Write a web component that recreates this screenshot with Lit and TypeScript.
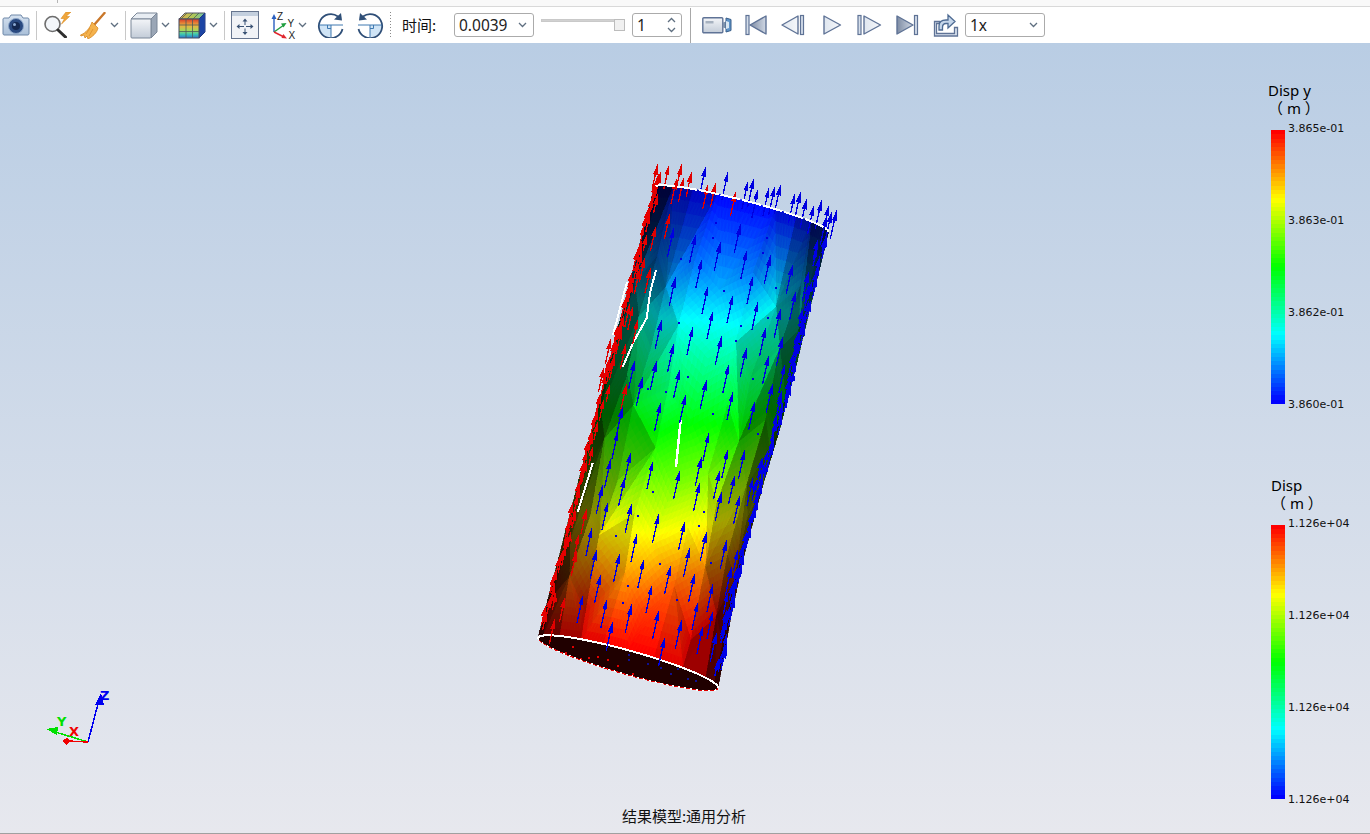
import { LitElement, css, html, svg } from "lit";
import { customElement, property } from "lit/decorators.js";

type Pt = [number, number];

function jet(c: number): string {
  const t = Math.max(0, Math.min(1, c));
  const ch = (x: number) => Math.round(255 * Math.max(0, Math.min(1, x)));
  const r = ch(t < 0.5 ? 0 : t < 0.75 ? (t - 0.5) * 4 : 1);
  const g = ch(t < 0.25 ? t * 4 : t < 0.75 ? 1 : (1 - t) * 4);
  const b = ch(t < 0.25 ? 1 : t < 0.5 ? (0.5 - t) * 4 : 0);
  return `${r},${g},${b}`;
}

function rng(seed: number) {
  let a = seed;
  return () => {
    a = (a + 0x6d2b79f5) | 0;
    let t = Math.imul(a ^ (a >>> 15), 1 | a);
    t = (t + Math.imul(t ^ (t >>> 7), 61 | t)) ^ t;
    return ((t ^ (t >>> 14)) >>> 0) / 4294967296;
  };
}

// cylinder surface, s = sin(angle) across, v along the axis
function surf(th: number, v: number): Pt {
  const s = Math.sin(th);
  const c = Math.cos(th);
  const cx = 741.5 + (628 - 741.5) * v;
  const cy = 209.5 + (663 - 209.5) * v;
  const ax = 87 + 3 * v;
  const ay = 22.5 + 2.5 * v;
  const waist = s > 0 && v > 0.4 && v < 1 ? 6 * Math.sin((Math.PI * (v - 0.4)) / 0.6) * s * s : 0;
  return [cx + ax * s + 3 * c - waist, cy + ay * s - (9 + 3 * v) * c];
}

// screen y to colour map position
function scalar(y: number): number {
  const stops: Pt[] = [[190, 0], [240, 0.02], [320, 0.25], [430, 0.5], [535, 0.75], [628, 1], [720, 1]];
  for (let i = 1; i < stops.length; i++) {
    if (y <= stops[i][0]) {
      const [y0, c0] = stops[i - 1];
      const [y1, c1] = stops[i];
      return c0 + ((c1 - c0) * Math.max(0, y - y0)) / (y1 - y0);
    }
  }
  return 1;
}

const DIR: Pt = [0.215, -0.976];

const z4 = (l: number[]): Pt[] => {
  const out: Pt[] = [];
  for (let i = 0; i < l.length; i += 2) out.push([530 + l[i] / 3, 150 + l[i + 1] / 3]);
  return out;
};
const z5 = (l: number[]): Pt[] => {
  const out: Pt[] = [];
  for (let i = 0; i < l.length; i += 2) out.push([530 + l[i] / 3, 420 + l[i + 1] / 3]);
  return out;
};

const BLUE_TIPS: Pt[] = [
  ...z4([528, 47, 595, 62, 672, 83, 655, 90, 685, 115, 718, 110, 735, 108, 752, 103, 812, 125, 795, 130, 830, 145, 852, 165, 875, 150, 897, 165, 920, 180, 905, 185, 890, 197,
    432, 232, 498, 252, 572, 275, 632, 222, 652, 298, 722, 315, 788, 343, 836, 365, 517, 325, 437, 380, 535, 405, 670, 375, 610, 432, 685, 452, 752, 475, 798, 422, 395, 508, 490, 527, 550, 480, 575, 558, 708, 530, 758, 560, 432, 578, 315, 630, 380, 632, 650, 592, 717, 615, 766, 640, 805, 550, 825, 520, 598, 640, 450, 657, 530, 688, 338, 680, 728, 700, 675, 752, 610, 722, 468, 732, 393, 755, 278, 770, 755, 730]),
  ...z5([265, 30, 303, 95, 243, 115, 370, 120, 285, 170, 218, 195, 450, 150, 510, 185, 538, 35, 305, 250, 235, 243, 387, 280, 465, 302, 530, 335, 322, 338, 187, 320, 270, 398, 200, 388, 343, 415, 423, 435, 480, 382, 495, 458, 550, 488, 213, 462, 160, 522, 367, 492, 232, 535, 305, 552, 505, 543, 550, 570, 387, 570, 455, 600, 248, 605, 405, 650, 520, 615, 560, 638, 590, 570, 615, 530, 590, 360, 630, 225, 575, 215, 615, 165, 570, 150, 645, 88, 595, 85, 515, 110, 700, 110, 670, 170, 690, 195, 640, 375, 605, 440]),
];

const RED_TIPS: Pt[] = [
  ...z4([383, 42, 418, 42, 455, 42, 392, 65, 485, 65, 462, 80, 440, 85, 535, 100, 558, 95, 618, 123, 378, 110, 345, 320, 362, 352, 330, 355, 310, 465, 325, 505, 275, 535, 243, 565, 288, 580, 255, 615, 290, 700, 222, 650, 420, 190, 378, 228]),
  ...z5([170, 265, 148, 340, 140, 392, 75, 595, 105, 530]),
];

const SPECKS: Pt[] = [
  ...z4([555, 215, 545, 262, 450, 323, 695, 305, 708, 260, 578, 420, 630, 525, 445, 515, 615, 570, 736, 412, 712, 500, 665, 685, 472, 678, 404, 722, 352, 715, 545, 790]),
  ...z5([322, 285, 367, 213, 256, 345, 388, 430, 290, 495, 438, 537, 275, 545, 518, 274, 505, 315, 540, 425, 680, 38]),
];

const DARK_RED_SPECKS: Pt[] = z5([125, 678, 150, 715, 175, 710, 200, 707, 105, 695, 230, 718, 260, 735, 305, 758]);
const DARK_BLUE_SPECKS: Pt[] = z5([295, 703, 295, 718, 350, 730, 390, 740, 420, 760, 470, 775, 495, 780, 440, 745]);

@customElement("fea-scene")
class FeaScene extends LitElement {
  static styles = css`
    :host {
      display: block;
      position: absolute;
      inset: 0;
    }
    svg {
      display: block;
      width: 100%;
      height: 100%;
    }
    .mesh polygon,
    .crisp {
      shape-rendering: crispEdges;
    }
    .axis-label {
      font-family: "DejaVu Sans", sans-serif;
      font-size: 13px;
      font-weight: 700;
    }
  `;

  private mesh() {
    const rand = rng(11);
    const cols = 10;
    const rows = 7;
    const verts: { p: Pt; c: number; s: number }[][] = [];
    for (let r = 0; r <= rows; r++) {
      const line = [];
      for (let i = 0; i <= cols; i++) {
        let th = -Math.PI / 2 + (Math.PI * i) / cols;
        let v = r / rows;
        if (i % 2 && r % rows) v += 0.5 / rows;
        if (i > 0 && i < cols) th += (rand() - 0.5) * 0.14;
        if (r > 0 && r < rows) v += (rand() - 0.5) * 0.04;
        const p = surf(th, Math.min(1, v));
        const s = Math.sin(th);
        const c = scalar(p[1] + 22 * s * s + (rand() - 0.5) * 14);
        line.push({ p, c, s });
      }
      verts.push(line);
    }
    const polys: ReturnType<typeof svg>[] = [];
    const tri = (a: any, b: any, d: any) => {
      const sm = (Math.abs(a.s) + Math.abs(b.s) + Math.abs(d.s)) / 3;
      let light = 1.1 - 0.92 * Math.pow(sm, 1.9) + (rand() - 0.5) * 0.16;
      if ((a.s + b.s + d.s) / 3 < -0.4) light -= 0.05;
      light = Math.max(0.16, Math.min(1, light));
      const n = 8;
      const lerp = (u: number, w: number) => {
        const q = 1 - u - w;
        return {
          x: a.p[0] * q + b.p[0] * u + d.p[0] * w,
          y: a.p[1] * q + b.p[1] * u + d.p[1] * w,
          c: a.c * q + b.c * u + d.c * w,
        };
      };
      const add = (p0: any, p1: any, p2: any) => {
        const rgb = jet((p0.c + p1.c + p2.c) / 3).split(",").map((x) => Math.round(+x * light));
        polys.push(svg`<polygon points="${p0.x},${p0.y} ${p1.x},${p1.y} ${p2.x},${p2.y}" fill="rgb(${rgb.join(",")})" stroke="rgb(${rgb.join(",")})" stroke-width="0.6"></polygon>`);
      };
      for (let i = 0; i < n; i++) {
        for (let j = 0; j < n - i; j++) {
          add(lerp(i / n, j / n), lerp((i + 1) / n, j / n), lerp(i / n, (j + 1) / n));
          if (i + j < n - 1) add(lerp((i + 1) / n, j / n), lerp((i + 1) / n, (j + 1) / n), lerp(i / n, (j + 1) / n));
        }
      }
    };
    for (let r = 0; r < rows; r++) {
      for (let i = 0; i < cols; i++) {
        const a = verts[r][i];
        const b = verts[r][i + 1];
        const c = verts[r + 1][i];
        const d = verts[r + 1][i + 1];
        if ((i + r) % 2) {
          tri(a, b, c);
          tri(b, d, c);
        } else {
          tri(a, b, d);
          tri(a, d, c);
        }
      }
    }
    return polys;
  }

  private arrow(tip: Pt, len: number, color: string) {
    const [dx, dy] = DIR;
    const base: Pt = [tip[0] - dx * len, tip[1] - dy * len];
    const hx = tip[0] - dx * 11;
    const hy = tip[1] - dy * 11;
    const w = 2.5;
    return svg`<g class="crisp" fill=${color} stroke=${color}>
      <line x1=${base[0]} y1=${base[1]} x2=${hx} y2=${hy} stroke-width="1.3"></line>
      <polygon stroke="none" points="${tip[0]},${tip[1]} ${hx - dy * w},${hy + dx * w} ${hx + dy * w},${hy - dx * w}"></polygon>
    </g>`;
  }

  private edgeArrows() {
    const rand = rng(21);
    const out: ReturnType<typeof svg>[] = [];
    const [dx, dy] = DIR;
    for (let v = 0.02; v < 0.99; v += 0.014) {
      const p = surf(-Math.PI / 2 + rand() * 0.4, v);
      const len = 17 + rand() * 9;
      out.push(this.arrow([p[0] + dx * len, p[1] + dy * len], len, "#e60000"));
    }
    for (let v = 0.05; v < 0.99; v += 0.012) {
      const p = surf(Math.PI / 2 - rand() * 0.45, v);
      const len = 16 + rand() * 9;
      out.push(this.arrow([p[0] + dx * len, p[1] + dy * len], len, "#0000e6"));
    }
    return out;
  }

  private rimPath(from: number, to: number, v: number, flip = false) {
    const pts: string[] = [];
    for (let i = 0; i <= 40; i++) {
      const th = from + ((to - from) * i) / 40;
      const p = surf(th, v);
      if (flip) {
        const c = Math.cos(th);
        pts.push(`${p[0] - 3 * c},${p[1] + 24 * c}`);
      } else pts.push(`${p[0]},${p[1]}`);
    }
    return pts.join(" ");
  }

  render() {
    const h = Math.PI / 2;
    return html`<svg viewBox="0 43 1370 790" aria-hidden="true">
      <polygon class="crisp" fill="#200000" points="${this.rimPath(-h, h, 1)} ${this.rimPath(h, -h, 1, true)}"></polygon>
      <g class="mesh">${this.mesh()}</g>
      ${DARK_RED_SPECKS.map(([x, y]) => svg`<rect class="crisp" x=${x} y=${y} width="2" height="2" fill="#e00000"></rect>`)}
      ${DARK_BLUE_SPECKS.map(([x, y]) => svg`<rect class="crisp" x=${x} y=${y} width="2" height="2" fill="#101090"></rect>`)}
      <g class="crisp" fill="none" stroke="#fff" stroke-width="2">
        <polyline points="656,270 650,293 646.7,318 633,343 622.7,367"></polyline>
        <polyline points="627,282 613,335"></polyline>
        <polyline points="592.7,463 577.7,512"></polyline>
        <polyline points="680.7,420 676,467" stroke-width="2.5"></polyline>
        <polyline points="${this.rimPath(-h, h, 1)}"></polyline>
        <polyline points="${this.rimPath(-h, h, 1, true)}" stroke="#e00000" stroke-width="1"></polyline>
        <polyline points="${this.rimPath(-h, h, 1, true)}" stroke-width="1.4" stroke-dasharray="2 4"></polyline>
      </g>
      ${this.edgeArrows()}
      ${RED_TIPS.map((t) => this.arrow(t, 26, "#e00000"))}
      ${BLUE_TIPS.map((t) => this.arrow(t, 30, "#0000e0"))}
      <polyline class="crisp" fill="none" stroke="#fff" stroke-width="2" stroke-dasharray="20 2" points="${this.rimPath(-h + 0.12, h, 0)}"></polyline>
      ${SPECKS.map(([x, y]) => svg`<rect class="crisp" x=${x} y=${y} width="2" height="2" fill="#0000e0"></rect>`)}

      <g class="crisp">
        <line x1="88" y1="742" x2="99" y2="700" stroke="#0000f0" stroke-width="1.5"></line>
        <polygon points="101,693 104,705 95,705" fill="#0000f0"></polygon>
        <line x1="88" y1="742" x2="52" y2="731" stroke="#00e000" stroke-width="1.5"></line>
        <polygon points="46,729 58,727 57,735" fill="#00e000"></polygon>
        <line x1="88" y1="742" x2="68" y2="741" stroke="#f00000" stroke-width="1.5"></line>
        <polygon points="62,741 67,738 70,741 67,745" fill="#f00000"></polygon>
      </g>
      <text class="axis-label" x="100" y="700" fill="#0000f0">Z</text>
      <text class="axis-label" x="57" y="726" fill="#00e000">Y</text>
      <text class="axis-label" x="69" y="736" fill="#f00000">X</text>
    </svg>`;
  }
}

@customElement("color-legend")
class ColorLegend extends LitElement {
  @property({ type: String }) name = "";
  @property({ type: Array }) ticks: string[] = [];
  @property({ type: Boolean }) shift = false;

  static styles = css`
    :host {
      display: grid;
      grid-template-columns: 14px auto;
      column-gap: 3px;
      color: #000;
    }
    .title {
      grid-column: 1 / 3;
      height: 48px;
      font: 15px/17.5px "Noto Sans", "Noto Sans CJK SC", sans-serif;
    }
    .title.shift {
      margin-left: -3px;
    }
    .title div {
      white-space: pre;
    }
    .bar {
      height: 274px;
    }
    .ticks {
      display: flex;
      flex-direction: column;
      justify-content: space-between;
      height: 290px;
      margin-top: -8px;
      font: 11px/14px "DejaVu Sans", sans-serif;
      color: #111;
    }
  `;

  render() {
    const bands = 64;
    const stops: string[] = [];
    for (let i = 0; i < bands; i++) {
      const col = `rgb(${jet(1 - i / (bands - 1))})`;
      stops.push(`${col} ${(i * 100) / bands}% ${((i + 1) * 100) / bands}%`);
    }
    return html`
      <div class="title ${this.shift ? "shift" : ""}">
        <div>${this.name}</div>
        <div>（ m ）</div>
      </div>
      <div class="bar" style="background: linear-gradient(to bottom, ${stops.join(",")})"></div>
      <div class="ticks">${this.ticks.map((t) => html`<span>${t}</span>`)}</div>
    `;
  }
}

const chevron = svg`<svg width="9" height="6" viewBox="0 0 9 6"><path d="M1 1l3.5 3.5L8 1" fill="none" stroke="#5f6f80" stroke-width="1.3"/></svg>`;

const tri = (id: string, dir: "l" | "r", x: number, w: number) =>
  dir === "l"
    ? svg`<polygon points="${x},11 ${x + w},2 ${x + w},20" fill="url(#${id})" stroke="#5f7396" stroke-width="1.4" stroke-linejoin="round"></polygon>`
    : svg`<polygon points="${x + w},11 ${x},2 ${x},20" fill="url(#${id})" stroke="#5f7396" stroke-width="1.4" stroke-linejoin="round"></polygon>`;

const bar = (x: number) =>
  svg`<rect x=${x} y="1.5" width="3" height="19" fill="#d5deea" stroke="#5f7396" stroke-width="1.2"></rect>`;

const ICONS = {
  camera: svg`<svg width="28" height="24" viewBox="0 0 28 24">
    <path d="M2 5h5l2-3h10l2 3h5a1.500 1.500 0 0 1 1 1v15a1.500 1.500 0 0 1-1 1H2a1.500 1.500 0 0 1-1-1V6a1.500 1.500 0 0 1 1-1z" fill="url(#gCam)" stroke="#6e88a8"/>
    <circle cx="14" cy="13" r="7.500" fill="#2a4a80" stroke="#8ba5c8"/>
    <circle cx="14" cy="13" r="4" fill="#14284f"/>
    <circle cx="12.500" cy="11.500" r="1.500" fill="#8aa8d0"/>
  </svg>`,
  search: svg`<svg width="29" height="26" viewBox="0 0 29 26">
    <circle cx="9.500" cy="12" r="7.500" fill="#f3f6fa" stroke="#6d6d6d" stroke-width="1.600"/>
    <path d="M15 18l7.500 7" stroke="#2f2f2f" stroke-width="3" stroke-linecap="round"/>
    <path d="M23 0l-5 6.500h3.500L18.500 12l8-7.500h-3.500L28 0z" fill="#f0a63a" stroke="#d98a1e" stroke-width=".6"/>
  </svg>`,
  broom: svg`<svg width="26" height="27" viewBox="0 0 26 27">
    <path d="M24.500 1L14 13" stroke="#c9772a" stroke-width="2.400" stroke-linecap="round"/>
    <path d="M12 10l6 6c-1 5-6 9-10 11l-1-3-2 2-1-3-3 1-.5-1C6 21 10 16 12 10z" fill="#f4b24d" stroke="#d88a25" stroke-width=".8"/>
    <path d="M10 16l-4 6M13 17l-4 7" stroke="#d88a25" stroke-width=".7"/>
  </svg>`,
  cube: svg`<svg width="28" height="27" viewBox="0 0 28 27">
    <path d="M1 7l6-6h20l-6 6z" fill="#e8edf3" stroke="#7b8798"/>
    <path d="M21 7l6-6v19l-6 6z" fill="#9aa6b6" stroke="#7b8798"/>
    <rect x="1" y="7" width="20" height="19" rx="1" fill="url(#gCube)" stroke="#7b8798"/>
  </svg>`,
  colorCube: svg`<svg width="28" height="27" viewBox="0 0 28 27">
    <path d="M1 7l6-6h20l-6 6z" fill="url(#gTop)" stroke="#556"/>
    <path d="M21 7l6-6v19l-6 6z" fill="#2450b8" stroke="#223a80"/>
    <rect x="1" y="7" width="20" height="19" fill="url(#gRain)" stroke="#444c60"/>
    <path d="M8 7v19M14.500 7v19M1 13h20M1 19.500h20M9 1l-6 6M15 1L9 7M21 1l-6 6" stroke="#4a5a5a" stroke-width=".8" fill="none"/>
    <path d="M23 5v19M25 3v19" stroke="#123080" stroke-width=".7"/>
  </svg>`,
  fit: svg`<svg width="28" height="28" viewBox="0 0 28 28">
    <rect x=".5" y=".5" width="27" height="27" fill="#f1f3f7" stroke="#66758f"/>
    <rect x="1" y="1" width="26" height="4" fill="#c3cfde"/>
    <g fill="#3a5274"><path d="M14 7.500l2.500 3h-2V14h-1v-3.500h-2zM14 24l-2.500-3h2v-3.500h1V21h2zM5.500 15.500l3-2.500v2H13v1H8.500v2zM22.500 15.500l-3-2.500v2H15v1h4.500v2z"/></g>
  </svg>`,
  axes: svg`<svg width="26" height="28" viewBox="0 0 26 28">
    <path d="M3 21V7" stroke="#2a5fc0" stroke-width="1.400"/><path d="M3 3l-2.500 5h5z" fill="#2a5fc0"/>
    <path d="M3 21l10-7" stroke="#1f9e3e" stroke-width="1.400"/><path d="M15.500 12l-5.500.5 2.500 4z" fill="#1f9e3e"/>
    <path d="M3 21l10 5" stroke="#e0262e" stroke-width="1.400"/><path d="M16 27.500l-5.500-.5 1.800-4z" fill="#e0262e"/>
    <text x="6" y="8.500" font-family="Liberation Sans" font-size="10" fill="#222">Z</text>
    <text x="16.500" y="16" font-family="Liberation Sans" font-size="10" fill="#222">Y</text>
    <text x="17.500" y="27.500" font-family="Liberation Sans" font-size="10" fill="#222">X</text>
  </svg>`,
  rotCw: svg`<svg width="28" height="26" viewBox="0 0 28 26">
    <path d="M2 13a12 12 0 0 0 12 12V13z" fill="#cfe4f6"/>
    <path d="M21 4.500A12 12 0 1 0 25.500 17" fill="none" stroke="#2f4f78" stroke-width="1.800"/>
    <path d="M2 13h24M14 13v12" stroke="#3f79b0" stroke-width="1"/>
    <path d="M10.500 13v3.500H14" fill="none" stroke="#3f79b0"/>
    <path d="M25 8.500L17 7.500 24 1z" fill="#2f4f78"/>
  </svg>`,
  rotCcw: svg`<svg width="28" height="26" viewBox="0 0 28 26">
    <path d="M26 13a12 12 0 0 1-12 12V13z" fill="#cfe4f6"/>
    <path d="M7 4.500A12 12 0 1 1 2.500 17" fill="none" stroke="#2f4f78" stroke-width="1.800"/>
    <path d="M2 13h24M14 13v12" stroke="#3f79b0" stroke-width="1"/>
    <path d="M17.500 13v3.500H14" fill="none" stroke="#3f79b0"/>
    <path d="M3 8.500l8-1L4 1z" fill="#2f4f78"/>
  </svg>`,
  video: svg`<svg width="30" height="18" viewBox="0 0 30 18">
    <rect x=".8" y="1.800" width="20" height="15" rx="1" fill="url(#gCube)" stroke="#5f7396" stroke-width="1.400"/>
    <rect x="3.500" y="5" width="8" height="2.500" fill="#a6b1bf"/>
    <path d="M21 6.500l3-1v7l-3-1z" fill="#7f93ad"/>
    <path d="M24 2l5 1.500v11L24 16z" fill="#5d93c8" stroke="#3a5f8a"/>
    <path d="M24 5l3 1v6l-3 1z" fill="#d8e6f2"/>
  </svg>`,
  first: svg`<svg width="22" height="22" viewBox="0 0 22 22">${bar(1)}${tri("gTri", "l", 5, 16)}</svg>`,
  prev: svg`<svg width="24" height="22" viewBox="0 0 24 22">${tri("gTriL", "l", 1, 16)}${bar(19.500)}</svg>`,
  play: svg`<svg width="19" height="22" viewBox="0 0 19 22">${tri("gTriL", "r", 1, 16.500)}</svg>`,
  next: svg`<svg width="25" height="22" viewBox="0 0 25 22">${bar(1)}${tri("gTriL", "r", 7, 16.500)}</svg>`,
  last: svg`<svg width="23" height="22" viewBox="0 0 23 22">${tri("gTri", "r", 1, 16)}${bar(18.500)}</svg>`,
  export: svg`<svg width="26" height="24" viewBox="0 0 26 24">
    <path d="M1.500 8.500h5v2h-3v10h18v-6h3v8.500H1.500z" fill="#dce5f0" stroke="#5f7396" stroke-width="1.300"/>
    <path d="M6 17v-4c0-4 3-6 7-6h2V2l7 6.500L15 15v-4.500h-2c-2 0-3.500 1.500-3.500 4V17z" fill="#c5d6ea" stroke="#4d6a92" stroke-width="1.300"/>
  </svg>`,
};

@customElement("app-root")
class AppRoot extends LitElement {
  static styles = css`
    :host {
      display: block;
      width: 1370px;
      height: 834px;
      overflow: hidden;
      background: #fff;
      font-family: "Noto Sans", "Noto Sans CJK SC", sans-serif;
    }
    .menu-edge {
      height: 6px;
      background: #f9f9f9;
      border-bottom: 1px solid #d9d9d9;
      padding-left: 57px;
    }
    .menu-edge i {
      display: block;
      width: 1px;
      height: 3px;
      background: #b5b5b5;
    }
    .toolbar {
      height: 36px;
      padding-left: 2px;
      display: flex;
      align-items: center;
      background: #fff;
      box-sizing: border-box;
    }
    .toolbar svg {
      display: block;
      flex: none;
    }
    .sep {
      width: 1px;
      height: 29px;
      background: #c8c8c8;
      flex: none;
    }
    .sep.tall {
      height: 36px;
      background: #a8a8a8;
      margin-top: 1px;
    }
    .sep.dots {
      height: 27px;
      background: repeating-linear-gradient(to bottom, #8a8a8a 0 1px, transparent 1px 3px);
    }
    .m1 { margin-left: 1px; }
    .m3 { margin-left: 3px; }
    .m4 { margin-left: 4px; }
    .m6 { margin-left: 6px; }
    .m7 { margin-left: 7px; }
    .m8 { margin-left: 8px; }
    .m10 { margin-left: 10px; }
    .m11 { margin-left: 11px; }
    .m12 { margin-left: 12px; }
    .m13 { margin-left: 13px; }
    .m14 { margin-left: 14px; }
    .m15 { margin-left: 15px; }
    .m16 { margin-left: 16px; }
    .m18 { margin-left: 18px; }
    .label {
      width: 36px;
      font: 15px/20px "Noto Sans CJK SC", sans-serif;
      color: #111;
      white-space: nowrap;
    }
    .field {
      box-sizing: border-box;
      height: 24px;
      border: 1px solid #ababab;
      border-radius: 3px;
      background: #fff;
      display: flex;
      align-items: center;
      justify-content: space-between;
      padding: 0 4px 0 4px;
      font: 15.500px/22px "Noto Sans", sans-serif;
      color: #222;
      flex: none;
      overflow: hidden;
    }
    .select {
      width: 80px;
    }
    .select svg {
      margin-right: 2px;
    }
    .spin {
      width: 50px;
    }
    .spin-arrows {
      display: flex;
      flex-direction: column;
      gap: 4px;
      margin-right: 1px;
    }
    .flip {
      transform: scaleY(-1);
    }
    .slider {
      position: relative;
      width: 84px;
      height: 12px;
      margin-top: -1px;
      flex: none;
    }
    .track {
      height: 3px;
      margin-right: 11px;
      background: linear-gradient(#bdbdbd, #e5e5e5);
      border: 1px solid #c9c9c9;
      border-right: none;
      box-sizing: border-box;
    }
    .thumb {
      position: absolute;
      right: 0;
      top: 0;
      width: 11px;
      height: 12px;
      box-sizing: border-box;
      background: #f0f0f0;
      border: 1px solid #bcbcbc;
    }
    .view {
      position: relative;
      height: 791px;
      box-sizing: border-box;
      border-bottom: 1px solid #a0a0a0;
      background: linear-gradient(#b9cde4, #e7e8ee);
      display: flex;
      flex-direction: column;
      justify-content: flex-end;
      align-items: center;
    }
    .model {
      position: relative;
      margin-left: -2px;
      padding-bottom: 7px;
      font: 15px/20px "Noto Sans CJK SC", sans-serif;
      color: #111;
    }
    .legends {
      position: absolute;
      top: 39px;
      left: 1271px;
      display: flex;
      flex-direction: column;
      gap: 65px;
    }
  `;

  render() {
    return html`
      <div class="menu-edge"><i></i></div>
      <svg width="0" height="0" style="position:absolute" aria-hidden="true">
        <defs>
          <linearGradient id="gCam" x1="0" y1="0" x2="0" y2="1"><stop offset="0" stop-color="#d6e2f0"/><stop offset="1" stop-color="#a9bfd8"/></linearGradient>
          <linearGradient id="gCube" x1="0" y1="0" x2="0" y2="1"><stop offset="0" stop-color="#f3f5f8"/><stop offset="1" stop-color="#c3ccd8"/></linearGradient>
          <linearGradient id="gTop" x1="0" y1="0" x2="1" y2="0"><stop offset="0" stop-color="#e8b04a"/><stop offset=".6" stop-color="#a8c85a"/><stop offset="1" stop-color="#6ac0b0"/></linearGradient>
          <linearGradient id="gRain" x1="0" y1="0" x2="0" y2="1"><stop offset="0" stop-color="#d93a2a"/><stop offset=".35" stop-color="#eeb23e"/><stop offset=".6" stop-color="#a6d65a"/><stop offset=".8" stop-color="#3cc8b0"/><stop offset="1" stop-color="#2f6fd0"/></linearGradient>
          <linearGradient id="gTri" x1="0" y1="0" x2="1" y2="0"><stop offset="0" stop-color="#7d8ba3"/><stop offset="1" stop-color="#d0d8e4"/></linearGradient>
          <linearGradient id="gTriL" x1="0" y1="0" x2="1" y2="0"><stop offset="0" stop-color="#dfe6ef"/><stop offset="1" stop-color="#f5f7fa"/></linearGradient>
        </defs>
      </svg>
      <div class="toolbar">
        ${ICONS.camera}
        <div class="sep m6"></div>
        <div class="m6">${ICONS.search}</div>
        <div class="m8">${ICONS.broom}</div>
        <div class="m4">${chevron}</div>
        <div class="sep m6"></div>
        <div class="m4">${ICONS.cube}</div>
        <div class="m3">${chevron}</div>
        <div class="m8">${ICONS.colorCube}</div>
        <div class="m3">${chevron}</div>
        <div class="sep m6"></div>
        <div class="m6">${ICONS.fit}</div>
        <div class="m12">${ICONS.axes}</div>
        <div class="m1">${chevron}</div>
        <div class="m10">${ICONS.rotCw}</div>
        <div class="m11">${ICONS.rotCcw}</div>
        <div class="sep dots m6"></div>
        <div class="label m11">时间:</div>
        <div class="field select m16"><span>0.0039</span>${chevron}</div>
        <div class="slider m7"><div class="track"></div><div class="thumb"></div></div>
        <div class="field spin m7">
          <span>1</span>
          <div class="spin-arrows"><div class="flip">${chevron}</div><div>${chevron}</div></div>
        </div>
        <div class="sep tall m8"></div>
        <div class="m11">${ICONS.video}</div>
        <div class="m13">${ICONS.first}</div>
        <div class="m14">${ICONS.prev}</div>
        <div class="m18">${ICONS.play}</div>
        <div class="m15">${ICONS.next}</div>
        <div class="m14">${ICONS.last}</div>
        <div class="m14">${ICONS.export}</div>
        <div class="field select m6"><span>1x</span>${chevron}</div>
      </div>
      <div class="view">
        <fea-scene></fea-scene>
        <div class="legends">
          <color-legend shift name="Disp y" .ticks=${["3.865e-01", "3.863e-01", "3.862e-01", "3.860e-01"]}></color-legend>
          <color-legend name="Disp" .ticks=${["1.126e+04", "1.126e+04", "1.126e+04", "1.126e+04"]}></color-legend>
        </div>
        <div class="model">结果模型:通用分析</div>
      </div>
    `;
  }
}
